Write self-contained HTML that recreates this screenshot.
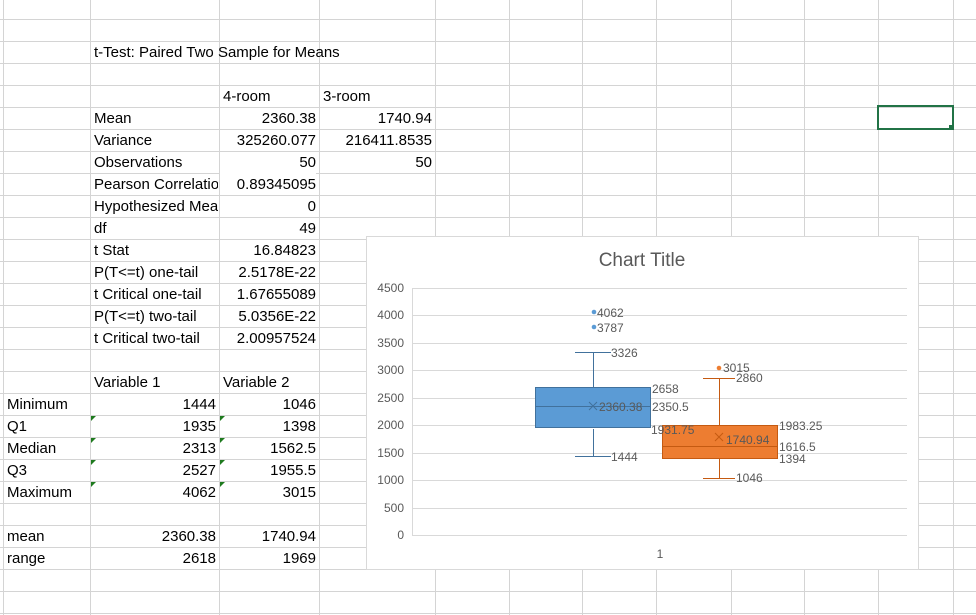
<!DOCTYPE html>
<html><head><meta charset="utf-8"><style>
body{margin:0;width:976px;height:615px;background:#fff;overflow:hidden;position:relative;font-family:"Liberation Sans",sans-serif;font-size:15px;color:#000}
.c{position:absolute;height:22px;line-height:23px;white-space:nowrap;overflow:hidden}
.r{text-align:right}
.t{position:absolute;width:0;height:0;border-top:5px solid #1e7a1e;border-right:5px solid transparent}
</style></head><body>
<svg width="976" height="615" style="position:absolute;left:0;top:0">
<g stroke="#d4d4d4" stroke-width="1">
<line x1="0" y1="19.5" x2="976" y2="19.5"/><line x1="0" y1="41.5" x2="976" y2="41.5"/><line x1="0" y1="63.5" x2="976" y2="63.5"/><line x1="0" y1="85.5" x2="976" y2="85.5"/><line x1="0" y1="107.5" x2="976" y2="107.5"/><line x1="0" y1="129.5" x2="976" y2="129.5"/><line x1="0" y1="151.5" x2="976" y2="151.5"/><line x1="0" y1="173.5" x2="976" y2="173.5"/><line x1="0" y1="195.5" x2="976" y2="195.5"/><line x1="0" y1="217.5" x2="976" y2="217.5"/><line x1="0" y1="239.5" x2="976" y2="239.5"/><line x1="0" y1="261.5" x2="976" y2="261.5"/><line x1="0" y1="283.5" x2="976" y2="283.5"/><line x1="0" y1="305.5" x2="976" y2="305.5"/><line x1="0" y1="327.5" x2="976" y2="327.5"/><line x1="0" y1="349.5" x2="976" y2="349.5"/><line x1="0" y1="371.5" x2="976" y2="371.5"/><line x1="0" y1="393.5" x2="976" y2="393.5"/><line x1="0" y1="415.5" x2="976" y2="415.5"/><line x1="0" y1="437.5" x2="976" y2="437.5"/><line x1="0" y1="459.5" x2="976" y2="459.5"/><line x1="0" y1="481.5" x2="976" y2="481.5"/><line x1="0" y1="503.5" x2="976" y2="503.5"/><line x1="0" y1="525.5" x2="976" y2="525.5"/><line x1="0" y1="547.5" x2="976" y2="547.5"/><line x1="0" y1="569.5" x2="976" y2="569.5"/><line x1="0" y1="591.5" x2="976" y2="591.5"/><line x1="0" y1="613.5" x2="976" y2="613.5"/>
<line x1="3.5" y1="0" x2="3.5" y2="615"/><line x1="90.5" y1="0" x2="90.5" y2="615"/><line x1="219.5" y1="0" x2="219.5" y2="615"/><line x1="319.5" y1="0" x2="319.5" y2="615"/><line x1="435.5" y1="0" x2="435.5" y2="615"/><line x1="509.5" y1="0" x2="509.5" y2="615"/><line x1="582.5" y1="0" x2="582.5" y2="615"/><line x1="656.5" y1="0" x2="656.5" y2="615"/><line x1="731.5" y1="0" x2="731.5" y2="615"/><line x1="804.5" y1="0" x2="804.5" y2="615"/><line x1="878.5" y1="0" x2="878.5" y2="615"/><line x1="953.5" y1="0" x2="953.5" y2="615"/>
</g>
</svg>
<div class="c" style="left:94px;top:41px">t-Test: Paired Two Sample for Means</div>
<div class="c" style="left:223px;top:85px">4-room</div>
<div class="c" style="left:323px;top:85px">3-room</div>
<div class="c" style="left:94px;top:107px;width:124px">Mean</div><div class="c r" style="left:220px;top:107px;width:96px">2360.38</div><div class="c r" style="left:320px;top:107px;width:112px">1740.94</div>
<div class="c" style="left:94px;top:129px;width:124px">Variance</div><div class="c r" style="left:220px;top:129px;width:96px">325260.077</div><div class="c r" style="left:320px;top:129px;width:112px">216411.8535</div>
<div class="c" style="left:94px;top:151px;width:124px">Observations</div><div class="c r" style="left:220px;top:151px;width:96px">50</div><div class="c r" style="left:320px;top:151px;width:112px">50</div>
<div class="c" style="left:94px;top:173px;width:124px">Pearson Correlation</div><div class="c r" style="left:220px;top:173px;width:96px;background:#fff">0.89345095</div>
<div class="c" style="left:94px;top:195px;width:124px">Hypothesized Mean</div><div class="c r" style="left:220px;top:195px;width:96px">0</div>
<div class="c" style="left:94px;top:217px;width:124px">df</div><div class="c r" style="left:220px;top:217px;width:96px">49</div>
<div class="c" style="left:94px;top:239px;width:124px">t Stat</div><div class="c r" style="left:220px;top:239px;width:96px">16.84823</div>
<div class="c" style="left:94px;top:261px;width:124px">P(T&lt;=t) one-tail</div><div class="c r" style="left:220px;top:261px;width:96px">2.5178E-22</div>
<div class="c" style="left:94px;top:283px;width:124px">t Critical one-tail</div><div class="c r" style="left:220px;top:283px;width:96px">1.67655089</div>
<div class="c" style="left:94px;top:305px;width:124px">P(T&lt;=t) two-tail</div><div class="c r" style="left:220px;top:305px;width:96px">5.0356E-22</div>
<div class="c" style="left:94px;top:327px;width:124px">t Critical two-tail</div><div class="c r" style="left:220px;top:327px;width:96px">2.00957524</div>
<div class="c" style="left:94px;top:371px">Variable 1</div><div class="c" style="left:223px;top:371px">Variable 2</div>
<div class="c" style="left:7px;top:393px">Minimum</div><div class="c r" style="left:91px;top:393px;width:125px">1444</div><div class="c r" style="left:220px;top:393px;width:96px">1046</div>
<div class="c" style="left:7px;top:415px">Q1</div><div class="c r" style="left:91px;top:415px;width:125px">1935</div><div class="c r" style="left:220px;top:415px;width:96px">1398</div>
<div class="c" style="left:7px;top:437px">Median</div><div class="c r" style="left:91px;top:437px;width:125px">2313</div><div class="c r" style="left:220px;top:437px;width:96px">1562.5</div>
<div class="c" style="left:7px;top:459px">Q3</div><div class="c r" style="left:91px;top:459px;width:125px">2527</div><div class="c r" style="left:220px;top:459px;width:96px">1955.5</div>
<div class="c" style="left:7px;top:481px">Maximum</div><div class="c r" style="left:91px;top:481px;width:125px">4062</div><div class="c r" style="left:220px;top:481px;width:96px">3015</div>
<div class="c" style="left:7px;top:525px">mean</div><div class="c r" style="left:91px;top:525px;width:125px">2360.38</div><div class="c r" style="left:220px;top:525px;width:96px">1740.94</div>
<div class="c" style="left:7px;top:547px">range</div><div class="c r" style="left:91px;top:547px;width:125px">2618</div><div class="c r" style="left:220px;top:547px;width:96px">1969</div>
<div class="t" style="left:91px;top:416px"></div><div class="t" style="left:220px;top:416px"></div>
<div class="t" style="left:91px;top:438px"></div><div class="t" style="left:220px;top:438px"></div>
<div class="t" style="left:91px;top:460px"></div><div class="t" style="left:220px;top:460px"></div>
<div class="t" style="left:91px;top:482px"></div><div class="t" style="left:220px;top:482px"></div>
<div style="position:absolute;left:877px;top:105px;width:73px;height:21px;border:2px solid #217346"></div>
<div style="position:absolute;left:949px;top:125px;width:5px;height:5px;background:#217346"></div>
<svg width="553" height="334" style="position:absolute;left:366px;top:236px;background:#fff" font-family="Liberation Sans, sans-serif">
<rect x="0.5" y="0.5" width="552" height="333" fill="#fff" stroke="#d9d9d9"/>
<text x="276" y="30" text-anchor="middle" font-size="19" fill="#595959">Chart Title</text>
<g stroke="#d9d9d9" stroke-width="1">
<line x1="46" y1="52.5" x2="541" y2="52.5"/><line x1="46" y1="79.5" x2="541" y2="79.5"/><line x1="46" y1="107.5" x2="541" y2="107.5"/><line x1="46" y1="134.5" x2="541" y2="134.5"/><line x1="46" y1="162.5" x2="541" y2="162.5"/><line x1="46" y1="189.5" x2="541" y2="189.5"/><line x1="46" y1="217.5" x2="541" y2="217.5"/><line x1="46" y1="244.5" x2="541" y2="244.5"/><line x1="46" y1="272.5" x2="541" y2="272.5"/><line x1="46" y1="299.5" x2="541" y2="299.5"/>
<line x1="46.5" y1="52" x2="46.5" y2="299"/>
</g>
<g font-size="12" fill="#595959" text-anchor="end">
<text x="38" y="56">4500</text><text x="38" y="83">4000</text><text x="38" y="111">3500</text><text x="38" y="138">3000</text><text x="38" y="166">2500</text><text x="38" y="193">2000</text><text x="38" y="221">1500</text><text x="38" y="248">1000</text><text x="38" y="276">500</text><text x="38" y="303">0</text>
</g>
<text x="294" y="322" font-size="12" fill="#595959" text-anchor="middle">1</text>
<g stroke="#41719c" stroke-width="1" fill="none">
<line x1="227.5" y1="116" x2="227.5" y2="153"/><line x1="227.5" y1="193" x2="227.5" y2="220"/>
<line x1="209" y1="116.5" x2="245" y2="116.5"/><line x1="209" y1="220.5" x2="245" y2="220.5"/>
</g>
<rect x="169.5" y="151.5" width="115" height="40" fill="#5b9bd5" stroke="#41719c"/>
<line x1="170" y1="170.5" x2="284" y2="170.5" stroke="#41719c"/>
<path d="M223 166l8 8M231 166l-8 8" stroke="#41719c" stroke-width="1"/>
<circle cx="228" cy="76" r="2.3" fill="#5b9bd5"/><circle cx="228" cy="91" r="2.3" fill="#5b9bd5"/>
<g stroke="#c55a11" stroke-width="1" fill="none">
<line x1="353.5" y1="142" x2="353.5" y2="190"/><line x1="353.5" y1="222" x2="353.5" y2="242"/>
<line x1="337" y1="142.5" x2="369" y2="142.5"/><line x1="337" y1="242.5" x2="369" y2="242.5"/>
</g>
<rect x="296.5" y="189.5" width="115" height="33" fill="#ed7d31" stroke="#c55a11"/>
<line x1="297" y1="210.5" x2="411" y2="210.5" stroke="#c55a11"/>
<path d="M349 197l8 8M357 197l-8 8" stroke="#c55a11" stroke-width="1"/>
<circle cx="353" cy="132" r="2.3" fill="#ed7d31"/>
<g font-size="12" fill="#595959">
<text x="231" y="81">4062</text><text x="231" y="96">3787</text><text x="245" y="121">3326</text>
<text x="286" y="157">2658</text><text x="233" y="175">2360.38</text><text x="286" y="175">2350.5</text><text x="285" y="198">1931.75</text>
<text x="245" y="225">1444</text>
<text x="357" y="136">3015</text><text x="370" y="146">2860</text>
<text x="413" y="194">1983.25</text><text x="360" y="208">1740.94</text><text x="413" y="215">1616.5</text><text x="413" y="227">1394</text>
<text x="370" y="246">1046</text>
</g>
</svg>
</body></html>
